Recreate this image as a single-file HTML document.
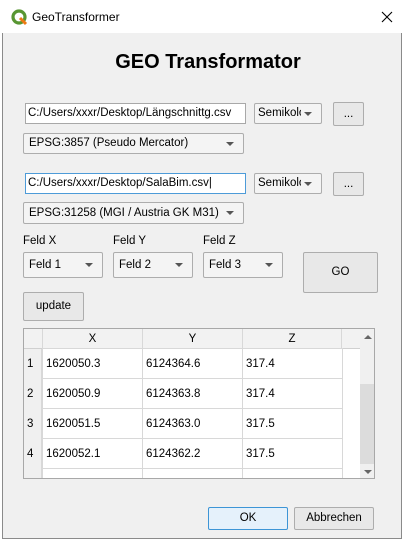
<!DOCTYPE html><html><head><style>
*{box-sizing:border-box;margin:0;padding:0}
body{width:405px;height:542px;overflow:hidden;background:#fff;font-family:"Liberation Sans",sans-serif;font-size:11.5px;color:#000;position:relative}
.a{position:absolute}
.win{left:2px;top:0;width:400px;height:539px;border:1px solid #8a8a8a;border-top:none;background:#f0f0f0}
.tb{left:0;top:0;width:405px;height:33px;background:#fff}
.inp{background:#fff;border:1px solid #a8a8a8;padding:3px 2px;line-height:13px;white-space:nowrap;overflow:hidden}
.cb{background:#f4f4f4;border:1px solid #adadad;border-radius:2px;padding:0 5px;white-space:nowrap;overflow:hidden}
.cb:after{content:"";position:absolute;right:9px;top:50%;margin-top:-2px;border:4px solid transparent;border-top:4px solid #555;border-bottom:none}
.cb span{display:inline-block;overflow:hidden;vertical-align:top}
.btn{background:#e8e8e8;border:1px solid #adadad;border-radius:2px;text-align:center}
table{border-collapse:collapse}
td{border:1px solid #d8d8d8;height:30px;padding-left:3px;background:#fff}
</style></head><body>
<div class="a win"></div>
<div class="a tb"></div>
<svg class="a" style="left:11px;top:9px" width="17" height="17" viewBox="0 0 17 17"><circle cx="8" cy="8" r="6" fill="none" stroke="#589632" stroke-width="3.2"/><path d="M9 9l6 6" stroke="#ee7913" stroke-width="3"/></svg>
<div class="a" style="left:32px;top:10px;font-size:12px">GeoTransformer</div>
<svg class="a" style="left:381px;top:11px" width="12" height="12"><path d="M1 1L11 11M11 1L1 11" stroke="#000" stroke-width="1.1"/></svg>
<div class="a" style="left:0;width:416px;top:51px;text-align:center;font-weight:bold;font-size:20px">GEO Transformator</div>

<div class="a inp" style="left:25px;top:103px;width:221px;height:21px">C:/Users/xxxr/Desktop/Längschnittg.csv</div>
<div class="a cb" style="left:254px;top:103px;width:68px;height:21px;line-height:19px;padding-left:3px"><span style="width:43px">Semikolon</span></div>
<div class="a btn" style="left:333px;top:102px;width:31px;height:24px;line-height:22px">...</div>
<div class="a cb" style="left:23px;top:133px;width:221px;height:21px;line-height:19px">EPSG:3857 (Pseudo Mercator)</div>

<div class="a inp" style="left:25px;top:173px;width:221px;height:21px;border-color:#4d9bd8">C:/Users/xxxr/Desktop/SalaBim.csv|</div>
<div class="a cb" style="left:254px;top:173px;width:68px;height:21px;line-height:19px;padding-left:3px"><span style="width:43px">Semikolon</span></div>
<div class="a btn" style="left:333px;top:172px;width:31px;height:24px;line-height:22px">...</div>
<div class="a cb" style="left:23px;top:202px;width:221px;height:22px;line-height:20px">EPSG:31258 (MGI / Austria GK M31)</div>

<div class="a" style="left:23px;top:235px">Feld X</div>
<div class="a" style="left:113px;top:235px">Feld Y</div>
<div class="a" style="left:203px;top:235px">Feld Z</div>
<div class="a cb" style="left:23px;top:252px;width:80px;height:26px;line-height:24px">Feld 1</div>
<div class="a cb" style="left:113px;top:252px;width:80px;height:26px;line-height:24px">Feld 2</div>
<div class="a cb" style="left:203px;top:252px;width:80px;height:26px;line-height:24px">Feld 3</div>
<div class="a btn" style="left:303px;top:252px;width:75px;height:41px;line-height:39px">GO</div>
<div class="a btn" style="left:23px;top:292px;width:61px;height:29px;line-height:27px">update</div>

<div class="a" style="left:23px;top:328px;width:352px;height:151px;border:1px solid #a8a8a8;background:#fff;overflow:hidden">
<div class="a" style="left:0;top:0;width:336px;height:20px;background:#f2f2f2;border-bottom:1px solid #d0d0d0"></div>
<div class="a" style="left:18px;top:0;width:100px;height:20px;line-height:20px;text-align:center;border-left:1px solid #d8d8d8">X</div>
<div class="a" style="left:118px;top:0;width:100px;height:20px;line-height:20px;text-align:center;border-left:1px solid #d8d8d8">Y</div>
<div class="a" style="left:218px;top:0;width:100px;height:20px;line-height:20px;text-align:center;border-left:1px solid #d8d8d8;border-right:1px solid #d8d8d8">Z</div>
<div class="a" style="left:0;top:20px;width:18px;height:140px;background:#f0f0f0;border-right:1px solid #d8d8d8"></div>
<table class="a" style="left:18px;top:19px;width:301px">
<tr><td style="width:100px">1620050.3</td><td style="width:100px">6124364.6</td><td>317.4</td></tr>
<tr><td>1620050.9</td><td>6124363.8</td><td>317.4</td></tr>
<tr><td>1620051.5</td><td>6124363.0</td><td>317.5</td></tr>
<tr><td>1620052.1</td><td>6124362.2</td><td>317.5</td></tr>
<tr><td></td><td></td><td></td></tr>
</table>
<div class="a" style="left:3px;top:29px">1</div><div class="a" style="left:3px;top:59px">2</div><div class="a" style="left:3px;top:89px">3</div><div class="a" style="left:3px;top:119px">4</div>
<div class="a" style="left:336px;top:0;width:15px;height:150px;background:#f0f0f0"></div>
<div class="a" style="left:336px;top:55px;width:15px;height:80px;background:#dcdcdc"></div>
<div class="a" style="left:340px;top:6px;border:4px solid transparent;border-bottom:4px solid #666;border-top:none"></div>
<div class="a" style="left:340px;top:141px;border:4px solid transparent;border-top:4px solid #666;border-bottom:none"></div>
</div>

<div class="a btn" style="left:208px;top:507px;width:80px;height:23px;line-height:21px;border-color:#3d95d6;background:#e5f1fb">OK</div>
<div class="a btn" style="left:294px;top:507px;width:80px;height:23px;line-height:21px">Abbrechen</div>
</body></html>
